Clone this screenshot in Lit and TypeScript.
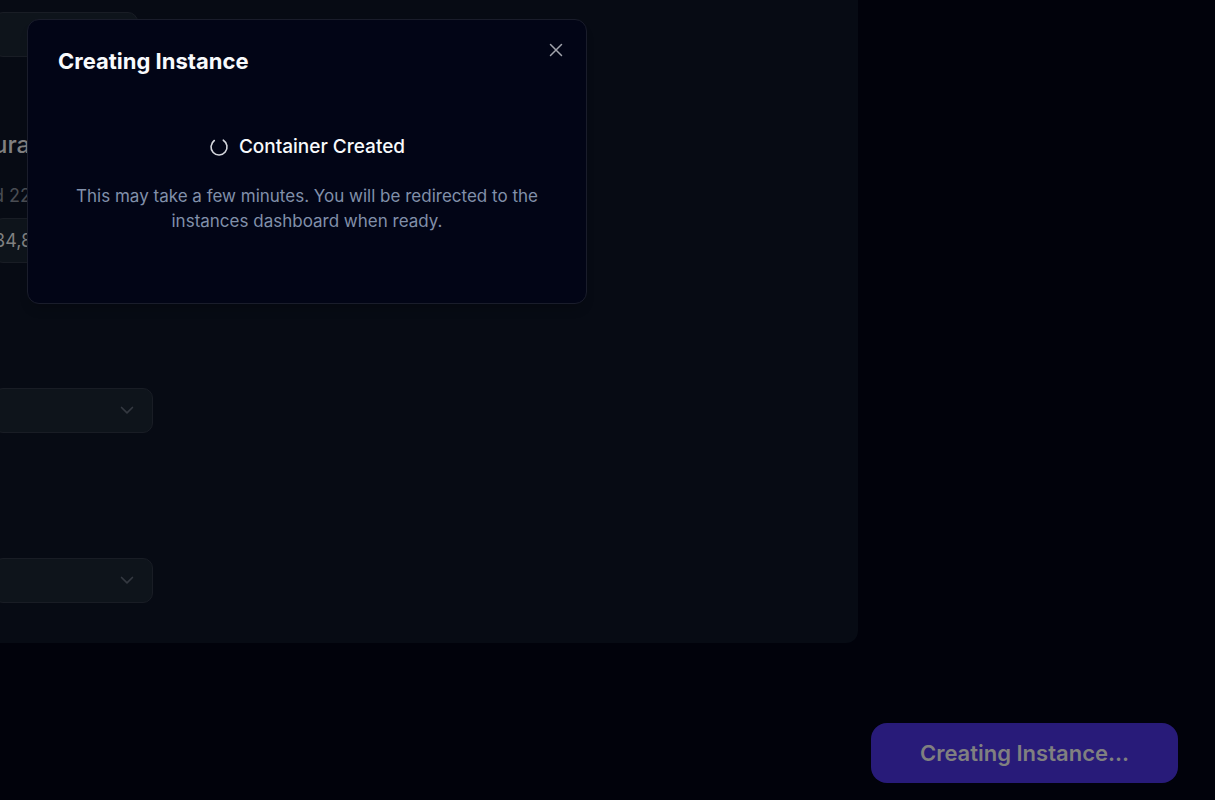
import { LitElement, html, css } from "lit";
import { customElement } from "lit/decorators.js";

@customElement("config-select")
class ConfigSelect extends LitElement {
  static styles = css`
    :host {
      display: grid;
      align-items: center;
    }
    .select,
    .chevron {
      grid-area: 1 / 1;
    }
    .select {
      appearance: none;
      box-sizing: border-box;
      width: 100%;
      height: 45px;
      margin: 0;
      padding: 0 40px 0 16px;
      border: 1px solid #191d25;
      border-radius: 10px;
      background: #0e141b;
      color: #808080;
      font: 18px Inter, sans-serif;
      opacity: 1;
    }
    .chevron {
      justify-self: end;
      width: 20px;
      height: 20px;
      margin-right: 16px;
      margin-bottom: 2px;
      pointer-events: none;
    }
  `;
  render() {
    return html`
      <select class="select" aria-label="Option" disabled>
        <option></option>
      </select>
      <svg class="chevron" viewBox="0 0 24 24" fill="none" stroke="#343941" stroke-width="2" stroke-linecap="round" stroke-linejoin="round" aria-hidden="true">
        <path d="m5.500 9 6.500 6.500 6.500-6.500" />
      </svg>
    `;
  }
}

@customElement("progress-dialog")
class ProgressDialog extends LitElement {
  static styles = css`
    :host {
      display: block;
    }
    .dialog {
      position: relative;
      box-sizing: border-box;
      width: 100%;
      margin: 0;
      padding: 29px;
      border: 1px solid #1a1d2b;
      border-radius: 12px;
      background: #020516;
      color: #f8fafc;
      box-shadow: 0 8px 12px -4px rgb(0 0 0 / 0.2);
    }
    .title {
      margin: 0;
      padding: 0 1px;
      font-size: 22px;
      font-weight: 700;
      line-height: 24px;
    }
    .close {
      position: absolute;
      top: 20px;
      right: 20px;
      display: flex;
      padding: 0;
      border: 0;
      background: none;
      color: #a2a4ac;
    }
    .body {
      display: flex;
      flex-direction: column;
      align-items: center;
      gap: 23px;
      padding: 60px 0 40px;
      text-align: center;
    }
    .status {
      display: flex;
      align-items: center;
      gap: 10px;
      font-size: 19px;
      font-weight: 500;
      line-height: 28px;
    }
    .note {
      max-width: 480px;
      margin: 0;
      color: #8190aa;
      font-size: 17px;
      line-height: 25px;
    }
  `;
  render() {
    return html`
      <dialog class="dialog" open aria-labelledby="title">
        <h2 class="title" id="title">Creating Instance</h2>
        <div class="body">
          <div class="status" role="status">
            <svg width="20" height="20" viewBox="0 0 20 20" fill="none" stroke="#d5d7dd" stroke-width="1.600" stroke-linecap="round" aria-hidden="true">
              <path d="M5.300 3.500A8 8 0 1 0 14.300 3.200" />
            </svg>
            <span>Container Created</span>
          </div>
          <p class="note">This may take a few minutes. You will be redirected to the instances dashboard when ready.</p>
        </div>
        <button class="close" type="button" aria-label="Close">
          <svg width="20" height="20" viewBox="0 0 20 20" fill="none" stroke="currentColor" stroke-width="1.500" stroke-linecap="round" aria-hidden="true">
            <path d="M4.500 4.500l11 11M15.500 4.500l-11 11" />
          </svg>
        </button>
      </dialog>
    `;
  }
}

@customElement("app-root")
class AppRoot extends LitElement {
  static styles = css`
    :host {
      display: block;
      font-family: Inter, sans-serif;
    }
    .page {
      position: relative;
      box-sizing: border-box;
      display: flex;
      flex-direction: column;
      align-items: flex-start;
      gap: 80px;
      min-height: 100vh;
      overflow: hidden;
      background: #01020b;
    }
    .panel {
      box-sizing: border-box;
      align-self: stretch;
      margin-right: 357px;
      padding: 12px 0 40px;
      border-radius: 0 0 12px 0;
      background: #070b14;
    }
    .form {
      display: flex;
      flex-direction: column;
      width: 160px;
      margin-left: -7px;
    }
    .field {
      box-sizing: border-box;
      width: 145px;
      height: 45px;
      margin: 0;
      padding: 0;
      border: 1px solid #191d25;
      border-radius: 10px;
      background: #0e141b;
      color: #808181;
      font: 18px Inter, sans-serif;
    }
    .heading {
      margin: 72px 0 0;
      color: #808080;
      font-size: 24px;
      font-weight: 500;
      line-height: 32px;
    }
    .hint {
      margin: 20px 0 8px;
      color: #4a4d53;
      font-size: 18px;
      line-height: 29px;
    }
    .selects {
      display: flex;
      flex-direction: column;
      gap: 125px;
      margin-top: 125px;
    }
    .submit {
      align-self: flex-end;
      margin: 0 37px 17px;
      padding: 14px 49px;
      border: 0;
      border-radius: 16px;
      background: #281b79;
      color: #808080;
      font: 600 22px/32px Inter, sans-serif;
    }
    .modal {
      position: absolute;
      top: 19px;
      left: 27px;
      width: 560px;
    }
  `;
  render() {
    return html`
      <main class="page">
        <section class="panel">
          <form class="form">
            <input class="field" type="text" aria-label="Value" />
            <h2 class="heading">ura</h2>
            <label class="hint" for="amount">d 22</label>
            <input class="field" id="amount" type="text" value="84,8" />
            <div class="selects">
              <config-select></config-select>
              <config-select></config-select>
            </div>
          </form>
        </section>
        <button class="submit" type="button">Creating Instance...</button>
        <progress-dialog class="modal"></progress-dialog>
      </main>
    `;
  }
}
